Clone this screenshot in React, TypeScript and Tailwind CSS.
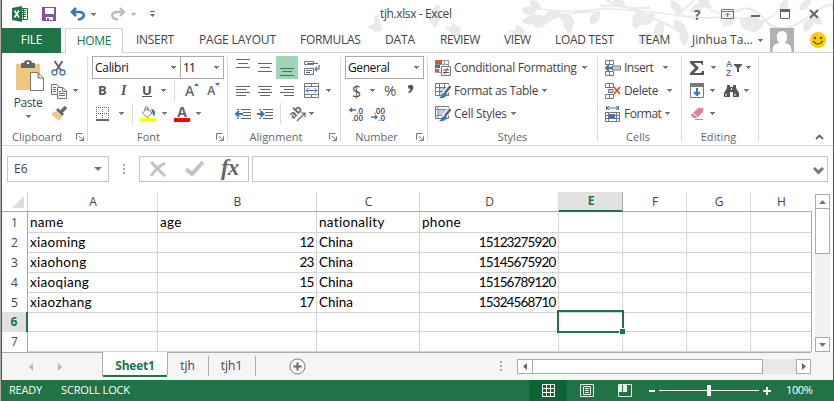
import React from "react";

type Kids = { children?: React.ReactNode; className?: string };

function Icon({ w = 16, h = 16, className = "", children }: Kids & { w?: number; h?: number }) {
  return (
    <svg width={w} height={h} viewBox={`0 0 ${w} ${h}`} fill="none" className={`shrink-0 ${className}`}>
      {children}
    </svg>
  );
}

function Caret({ className = "text-[#777]" }: { className?: string }) {
  return (
    <Icon w={5} h={3} className={className}>
      <path d="M0 0h5v1h-1v1h-1v1h-1v-1h-1v-1h-1z" fill="currentColor" shapeRendering="crispEdges" />
    </Icon>
  );
}

function Launcher() {
  return (
    <Icon w={8} h={8}>
      <path d="M.5 6.500V.5H6.500M3 3L7 7M7.500 3.500V7.500H3.500" stroke="#777" />
    </Icon>
  );
}

function Row({ children, className = "" }: Kids) {
  return <div className={`flex h-[23px] shrink-0 items-center whitespace-nowrap ${className}`}>{children}</div>;
}

function Group({ label, labelClass, launcher, className, children }: Kids & { label: string; labelClass: string; launcher?: boolean }) {
  return (
    <section className={`flex shrink-0 ${className}`}>
      <div className="flex min-w-0 flex-1 flex-col pt-[3px]">
        {children}
        <div className="mt-[3px] flex h-[18px] shrink-0 items-center pr-[3px] text-[11px] leading-[16px] text-[#666]">
          <span className={`flex-1 whitespace-nowrap text-center ${labelClass}`}>{label}</span>
          {launcher && <Launcher />}
        </div>
      </div>
      <div className="mt-1 h-[84px] w-px bg-[#dcdcdc]" />
    </section>
  );
}

function Combo({ text, className }: { text: string; className: string }) {
  return (
    <div className={`flex h-[23px] items-center justify-between border border-[#ababab] bg-white pr-1 pl-[2px] text-[12px] text-[#111] ${className}`}>
      <span>{text}</span>
      <Caret />
    </div>
  );
}

const Lines = ({ d }: { d: string }) => (
  <Icon w={14} h={16}>
    <path d={d} stroke="#666" shapeRendering="crispEdges" />
  </Icon>
);

const leaves: [number, number, number, number, number][] = [
  [537, 12, 190, 16, 9], [545, 17, 168, 24, 10], [549, 18, 150, 18, 9], [554, 18, 170, 16, 8],
  [562, 12, 165, 18, 10], [566, 16, 75, 18, 9], [558, 14, 30, 20, 10], [541, 9, 215, 14, 8], [600, 12, 130, 16, 9],
  [626, 8, 220, 18, 8], [640, 10, 105, 20, 10], [655, 14, 145, 18, 10], [661, 20, 100, 22, 10], [674, 20, 50, 18, 10],
  [682, 14, 230, 18, 8], [690, 12, 330, 18, 8], [650, 33, 140, 16, 9], [683, 26, 85, 20, 9],
  [712, 8, 215, 18, 8], [735, 16, 140, 16, 8], [740, 18, 45, 18, 10], [762, 22, 190, 20, 9], [765, 20, 140, 20, 8],
  [781, 12, 295, 14, 8], [799, 10, 320, 16, 8], [808, 14, 35, 18, 8], [812, 18, 120, 16, 9],
];

function Foliage() {
  return (
    <svg width="470" height="52" viewBox="363 0 470 52" className="pointer-events-none absolute top-0 right-0" fill="#e7eaea">
      <path d="M379 14c-6 1-4 7-5 10l-7 3c3 2 7 1 7 5c3-1 7 0 9-4c-3-5-5-9-4-14z" />
      <path d="M438 4c5 7 3 17-3 24c-4-5-8-8-5-14c1-5 5-7 8-10z" />
      <path d="M444 28c6-2 9 0 8-5c5 2 5 5 10 4l-3 4l4 5h-8c-4-1-4-5-11-8zM508 31c6-2 9 2 8-7c5 2 5 5 10 6l-3 3l3 4h-10c-4-1-4-4-8-6z" />
      <g stroke="#e7eaea" fill="none" strokeWidth="1.500">
        <path d="M535 9C545 8 560 15 600 9C625 8 645 12 676 15M545 21Q565 11 600 12" />
        <path d="M600 6Q623 4 640 12T678 30M606 0Q630 12 650 7M676 15Q689 6 694 0M676 15Q720 22 735 12T765 20T808 17T833 11" strokeWidth="2" />
        <path d="M698 0Q710 14 740 18M765 20Q778 15 786 0" />
      </g>
      {leaves.map(([x, y, a, l, w], i) => (
        <path key={i} transform={`translate(${x} ${y}) rotate(${a})`} d={`M0 0Q${l / 2} ${-w} ${l} 0Q${l / 2} ${w} 0 0`} />
      ))}
    </svg>
  );
}

function TitleBar() {
  return (
    <header className="flex h-7 items-center text-[#666]">
      <Icon className="ml-[10px]">
        <path d="M8 2.500h7.500v11H8" fill="#fff" stroke="#217346" />
        <path d="M10 4.500h4M10 6.500h4M10 8.500h4M10 10.500h4M11.500 3v10" stroke="#217346" />
        <path d="M0 2L10 0V16L0 14z" fill="#217346" />
        <path d="M2.500 4.500L7 11.500M7 4.500L2.500 11.500" stroke="#fff" strokeWidth="1.600" />
      </Icon>
      <Icon w={14} h={14} className="ml-[14px]">
        <path d="M0 0H14V14H0z" fill="#8353ab" />
        <path d="M3 1H12V7H3zM4 10H11V13H7V11H5V13H4z" fill="#fff" />
      </Icon>
      <Icon w={16} h={14} className="ml-[14px]">
        <path d="M6 1L2 5L6 9M2.500 5H9C16 5 15 12 8 12.500" stroke="#3f76b2" strokeWidth="2.600" />
      </Icon>
      <span className="ml-[5px]"><Caret /></span>
      <Icon w={16} h={14} className="ml-[14px]">
        <path d="M10 1L14 5L10 9M13.500 5H7C0 5 1 12 8 12.500" stroke="#bcbcbc" strokeWidth="2.400" />
      </Icon>
      <span className="ml-[5px]"><Caret className="text-[#bbb]" /></span>
      <Icon w={5} h={6} className="ml-[14px]">
        <path d="M0 0H5V1H0zM0 3H5L2.500 6z" fill="#666" />
      </Icon>
      <h1 className="ml-[225px] w-[298px] text-[12px] tracking-[-0.38px] whitespace-nowrap text-[#444]">tjh.xlsx - Excel</h1>
      <span className="ml-[16px] w-2 text-[14px] font-bold">?</span>
      <Icon w={13} h={10} className="ml-[19px]">
        <path d="M.5 .5H12.500V9.500H.5zM1 2.500H12M6.500 8V4M4.500 6L6.500 4L8.500 6" stroke="#777" />
      </Icon>
      <Icon w={9} h={10} className="ml-[17px]"><path d="M0 6H9V8H0z" fill="#666" /></Icon>
      <Icon w={10} h={10} className="ml-5"><path d="M.5 1V9.500H9.500V1M0 1.500H10" stroke="#666" /><path d="M0 0H10V3H0z" fill="#666" /></Icon>
      <Icon w={10} h={10} className="ml-[19px]"><path d="M1 1L9 9M9 1L1 9" stroke="#666" strokeWidth="2" /></Icon>
    </header>
  );
}

function Tabs() {
  return (
    <nav className="flex h-[25px] items-center border-b border-[#d4d4d4] text-[12px] whitespace-nowrap text-[#444]">
      <span className="flex h-[25px] w-[59px] items-center justify-center bg-[#217346] tracking-[-0.3px] text-white">FILE</span>
      <span className="-mb-px ml-1 flex h-[25px] w-[58px] items-center justify-center border border-b-0 border-[#d4d4d4] bg-white tracking-[-0.3px] text-[#217346]">HOME</span>
      <span className="ml-[13px] w-[63px] tracking-[-0.3px]">INSERT</span>
      <span className="w-[101px] tracking-[-0.15px]">PAGE LAYOUT</span>
      <span className="w-[85px] tracking-[-0.3px]">FORMULAS</span>
      <span className="w-[55px] tracking-[-0.1px]">DATA</span>
      <span className="w-16 tracking-[-0.4px]">REVIEW</span>
      <span className="w-[51px] tracking-[-0.4px]">VIEW</span>
      <span className="w-[84px] tracking-[-0.3px]">LOAD TEST</span>
      <span className="w-[53px] tracking-[-0.1px]">TEAM</span>
      <span className="w-[66px]">Jinhua Ta...</span>
      <Caret />
      <Icon w={24} h={24} className="ml-[7px]">
        <path d="M0 0H24V24H0z" fill="#b1b1b1" />
        <path d="M12 3c7 0 6 10 2.500 12c5 1 7 2 7 9h-19c0-7 2-8 7-9C6 13 5 3 12 3z" fill="#fff" />
      </Icon>
      <Icon w={16} h={16} className="ml-4">
        <circle cx="8" cy="8" r="8" fill="#fc0" />
        <circle cx="5" cy="6" r="1.300" fill="#555" /><circle cx="11" cy="6" r="1.300" fill="#555" />
        <path d="M3 9Q8 15 13 9" stroke="#555" strokeWidth="1.200" />
      </Icon>
    </nav>
  );
}

function Clipboard() {
  return (
    <Group label="Clipboard" labelClass="pr-[4px]" launcher className="w-[86px]">
      <div className="flex h-[69px] shrink-0">
        <div className="ml-[10px] flex w-8 flex-col items-center text-[12px] text-[#444]">
          <Icon w={30} h={32} className="mt-[4px] ml-[3px]">
            <path d="M1 4H25V30H1z" fill="#edc87e" />
            <path d="M6 3H9Q9 0 13 0T17 3H20V8H6z" fill="#666" /><path d="M12 2h2v2h-2z" fill="#fff" />
            <path d="M15.500 12.500H23L28.500 18V30.500H15.500zM23 12.500V18H28.500" fill="#fff" stroke="#777" />
          </Icon>
          <span className="mt-[2px] leading-[18px] tracking-[-0.4px]">Paste</span>
          <span className="mt-[3px]"><Caret /></span>
        </div>
        <div className="ml-[7px]">
          <Row>
            <Icon>
              <path d="M3.500 1L10.500 11M11.500 1L5 11" stroke="#666" strokeWidth="2" />
              <circle cx="3.500" cy="12.500" r="2.500" stroke="#3f76b2" strokeWidth="1.300" /><circle cx="11.500" cy="12.500" r="2.500" stroke="#3f76b2" strokeWidth="1.300" />
            </Icon>
          </Row>
          <Row>
            <Icon>
              <path d="M.5 1.500H6L8.500 4V11.500H.5z" fill="#fff" stroke="#777" />
              <path d="M2 4.500H5M2 6.500H5M2 8.500H5" stroke="#3f76b2" />
              <path d="M6.500 4.500H12L15.500 8V15.500H6.500zM11.500 4.500V8.500H15" fill="#fff" stroke="#777" />
              <path d="M8 8.500H10M8 10.500H14M8 12.500H14" stroke="#3f76b2" />
            </Icon>
            <span className="ml-[6px]"><Caret /></span>
          </Row>
          <Row>
            <Icon>
              <path d="M0 8L5 5L11 11L8 15z" fill="#edc87e" /><path d="M5 4L7 2L13 8L11 10z" fill="#666" />
              <path d="M10 6L15 1" stroke="#666" strokeWidth="3.500" />
            </Icon>
          </Row>
        </div>
      </div>
    </Group>
  );
}

function FontGroup() {
  return (
    <Group label="Font" labelClass="pr-[7px]" launcher className="w-[140px]">
      <Row className="pl-1"><Combo text="Calibri" className="w-[89px] tracking-[-0.3px]" /><Combo text="11" className="-ml-px w-[44px] tracking-[-0.8px]" /></Row>
      <Row className="text-[13px] text-[#555]">
        <span className="ml-[10px] w-[23px] font-bold">B</span>
        <span className="w-[21px] font-['Liberation_Serif'] text-[14px] font-bold italic">I</span>
        <span className="w-[19px] font-bold underline">U</span>
        <Caret />
        <span className="ml-[8px] h-[21px] w-px bg-[#dcdcdc]" />
        <span className="ml-[10px] text-[14px] font-semibold text-[#666]">A</span>
        <Icon w={5} h={3} className="mb-[12px]"><path d="M0 3L2.500 0L5 3z" fill="#3f76b2" /></Icon>
        <span className="ml-[8px] text-[12px] font-semibold text-[#666]">A</span>
        <Icon w={5} h={3} className="mb-[12px]"><path d="M0 0L2.500 3L5 0z" fill="#3f76b2" /></Icon>
      </Row>
      <Row>
        <Icon w={14} h={14} className="ml-2">
          <path d="M0 .5H13M0 6.500H13M.5 0V12M6.500 0V12M12.500 0V12" stroke="#666" strokeDasharray="1 1" shapeRendering="crispEdges" /><path d="M0 12H13V14H0z" fill="#666" />
        </Icon>
        <span className="ml-[9px]"><Caret /></span>
        <span className="ml-[8px] h-[21px] w-px bg-[#dcdcdc]" />
        <Icon className="ml-[7px]">
          <path d="M7 2.500L12 7L7 11.500L2.500 7zM5 5V1.500Q6.500 0 8 1.500V5" fill="#fff" stroke="#777" />
          <path d="M11 3C15 3 16 6 14 11L12 6z" fill="#3f76b2" /><path d="M0 12H16V16H0z" fill="#ff0" />
        </Icon>
        <span className="ml-[6px]"><Caret /></span>
        <span className="ml-[7px] flex h-4 w-4 justify-center border-b-4 border-[red] text-[14px] leading-[12px] font-bold text-[#666]">A</span>
        <span className="ml-[6px]"><Caret /></span>
      </Row>
    </Group>
  );
}

function Alignment() {
  return (
    <Group label="Alignment" labelClass="pr-[5px] tracking-[0.1px]" launcher className="w-[113px]">
      <Row className="pl-2">
        <span className="-mt-2"><Lines d="M0 3.500H14M2 7.500H12M0 11.500H14" /></span>
        <span className="-mt-1 ml-2"><Lines d="M0 5.500H14M2 9.500H12M0 13.500H14" /></span>
        <span className="ml-[4px] flex h-[23px] w-[22px] items-end justify-center bg-[#9fd5b7]"><Lines d="M0 5.500H14M2 8.500H12M0 12.500H14" /></span>
        <Icon className="ml-[6px]">
          <path d="M.5 1.500H9.500V4.500H.5zM.5 8.500H9.500V14.500H.5z" stroke="#777" />
          <path d="M3 3.500H14M2 10.500H8M2 12.500H6M15 5V9H11M13 7L11 9L13 11" stroke="#3f76b2" strokeWidth="1.200" />
        </Icon>
      </Row>
      <Row className="pl-2">
        <Lines d="M0 3.500H14M0 6.500H10M0 9.500H14M0 12.500H10" />
        <span className="ml-2"><Lines d="M0 3.500H14M2 6.500H12M0 9.500H14M2 12.500H12" /></span>
        <span className="ml-2"><Lines d="M0 3.500H14M4 6.500H14M0 9.500H14M4 12.500H14" /></span>
        <Icon w={15} h={15} className="ml-[10px]">
          <path d="M.5 .5H14.500V14.500H.5zM0 3.500H15M0 11.500H15M7.500 0V3M7.500 12V15" stroke="#777" />
          <path d="M2 7.500H13M4.500 5L2 7.500L4.500 10M10.500 5L13 7.500L10.500 10" stroke="#3f76b2" />
        </Icon>
        <span className="ml-[7px]"><Caret /></span>
      </Row>
      <Row className="pl-[7px]">
        <Icon><path d="M2 3.500H4M6 3.500H16M8 6.500H16M8 9.500H16M2 12.500H4M6 12.500H16" stroke="#666" /><path d="M1 8H8M4 5L1 8L4 11" stroke="#3f76b2" strokeWidth="2" /></Icon>
        <Icon className="ml-[6px]"><path d="M2 3.500H4M6 3.500H16M8 6.500H16M8 9.500H16M2 12.500H4M6 12.500H16" stroke="#666" /><path d="M0 8H7M3.500 5L6.500 8L3.500 11" stroke="#3f76b2" strokeWidth="2" /></Icon>
        <span className="ml-[7px] h-[21px] w-px bg-[#dcdcdc]" />
        <span className="ml-[7px] flex w-[17px] items-center">
          <span className="mb-1 -rotate-45 text-[11px] leading-none font-bold text-[#666]">ab</span>
          <Icon w={10} h={12} className="mt-1 -ml-[6px]"><path d="M1 11L9 3M5 3H9V7" stroke="#666" strokeWidth="1.200" /></Icon>
        </span>
        <span className="ml-[4px]"><Caret /></span>
      </Row>
    </Group>
  );
}

function NumberGroup() {
  return (
    <Group label="Number" labelClass="pr-[4px]" launcher className="w-[87px]">
      <Row className="pl-1"><Combo text="General" className="w-[79px] tracking-[-0.4px]" /></Row>
      <Row className="text-[16px] text-[#555]">
        <span className="ml-[11px] w-[18px]">$</span><Caret />
        <span className="ml-[9px] w-[24px] text-[15px]">%</span>
        <Icon w={6} h={8} className="mb-1"><path d="M1 0H4Q6 1 5 4T1 8L0 7Q2 6 2.500 4Q0 4 0 2Q0 .5 1 0z" fill="#555" /></Icon>
      </Row>
      <Row className="text-[8px] leading-[7px] text-[#444]">
        <span className="ml-[7px] flex w-[15px] flex-col items-end font-semibold">
          <span className="flex items-center"><Icon w={7} h={6}><path d="M0 3H7M3 1L1 3L3 5" stroke="#3f76b2" strokeWidth="1.500" /></Icon>.0</span><span>.00</span>
        </span>
        <span className="ml-[7px] flex w-[15px] flex-col items-end font-semibold">
          <span>.00</span><span className="flex items-center"><Icon w={7} h={6}><path d="M0 3H6M4 1L6 3L4 5" stroke="#3f76b2" strokeWidth="1.500" /></Icon>.0</span>
        </span>
      </Row>
    </Group>
  );
}

function TableGrid() {
  return <path d="M.5 .5H13.500V12.500H.5zM0 4.500H14M0 8.500H14M4.500 0V13M9.500 0V13" stroke="#777" />;
}
const Brush = () => (
  <>
    <path d="M15.500 3L9 11" stroke="#fff" strokeWidth="5" /><path d="M15.500 3L10 10" stroke="#666" strokeWidth="2.500" />
    <path d="M11 9L12 12Q9 16 4 15Q7 13 7 11z" fill="#3f76b2" />
  </>
);

function Styles() {
  return (
    <Group label="Styles" labelClass="pl-[3px]" className="w-[170px]">
      <div className="pl-[7px] text-[12px] text-[#444]">
        <Row>
          <Icon><path d="M.5 .5H13.500V12.500H.5z" stroke="#999" /><path d="M9.500 0V5M0 4.500H14" stroke="#999" /><path d="M0 0H7V4H0z" fill="#e2532f" /><path d="M0 5H5V8H0z" fill="#3f76b2" /><path d="M0 9H4V12H0z" fill="#e2532f" /><path d="M6.500 6.500H15.500V15.500H6.500z" fill="#fff" stroke="#777" /><path d="M8 10H14M8 12.500H14M12.500 8L9.500 14" stroke="#555" /></Icon>
          <span className="ml-[3px] w-[128px] tracking-[-0.28px]">Conditional Formatting</span><Caret />
        </Row>
        <Row>
          <Icon><path d="M4 4H14V13H4z" fill="#bdd0e8" /><TableGrid /><Brush /></Icon>
          <span className="ml-[3px] w-[88px] tracking-[-0.35px]">Format as Table</span><Caret />
        </Row>
        <Row>
          <Icon><path d="M.5 .5H13.500V12.500H.5z" stroke="#777" /><path d="M3 3H12V10H3z" fill="#bdd0e8" /><path d="M3 .5V12M0 3.500H14M0 9.500H10" stroke="#888" /><Brush /></Icon>
          <span className="ml-[3px] w-[57px] tracking-[-0.3px]">Cell Styles</span><Caret />
        </Row>
      </div>
    </Group>
  );
}

function Cells() {
  const blocks = "M.5 .5H8.500V4.500H.5zM4.500 .5V4.500M.5 11.500H8.500V15.500H.5zM4.500 11.500V15.500";
  return (
    <Group label="Cells" labelClass="" className="w-[84px]">
      <div className="pl-[7px] text-[12px] text-[#444]">
        <Row><Icon><path d={blocks} stroke="#777" /><path d="M7 6H15.500V10H7z" fill="#bdd0e8" stroke="#777" /><path d="M1 8H8M4 5L1 8L4 11" stroke="#3f76b2" strokeWidth="2" /></Icon><span className="ml-[3px] w-[39px] tracking-[-0.5px]">Insert</span><Caret /></Row>
        <Row><Icon><path d={blocks} stroke="#777" /><path d="M3.500 6.500H8V9.500H3.500z" fill="#bdd0e8" stroke="#777" /><path d="M9 4L15 11M15 4L9 11" stroke="#e2532f" strokeWidth="1.800" /></Icon><span className="ml-[3px] w-[43px] tracking-[-0.35px]">Delete</span><Caret /></Row>
        <Row><Icon><path d="M1.500 0V4M13.500 0V4M2 2H13M4 0L2 2L4 4M11 0L13 2L11 4" stroke="#3f76b2" /><path d="M.5 6.500H14.500V15.500H.5zM0 9.500H15M0 12.500H15M3.500 6V16M11.500 6V16" stroke="#777" /><path d="M4 8H10V13H4z" fill="#3f76b2" /></Icon><span className="ml-[3px] w-[41px] tracking-[-0.5px]">Format</span><Caret /></Row>
      </div>
    </Group>
  );
}

function Editing() {
  return (
    <Group label="Editing" labelClass="tracking-[0.1px]" className="w-[77px]">
      <Row className="pl-[7px]">
        <Icon><path d="M1 1H14V5H13L12 3H5L10 8L5 13H12L13 11H15V15H1V13L6 8L1 3z" fill="#555" /></Icon>
        <span className="ml-[6px]"><Caret /></span>
        <span className="ml-[10px] flex w-[6px] flex-col text-[9px] leading-[9px] font-semibold"><span className="text-[#3f76b2]">A</span><span className="text-[#8b4bab]">Z</span></span>
        <Icon w={8} h={8} className="ml-[2px]"><path d="M0 0H8V1L5 4V8H3V4L0 1z" fill="#555" /></Icon>
        <span className="ml-[4px]"><Caret /></span>
      </Row>
      <Row className="pl-2">
        <Icon w={14} h={16}><path d="M.5 .5H13.500V14.500H.5z" fill="#fff" stroke="#777" /><path d="M0 0H14V4H0z" fill="#777" /><path d="M7 5V12M4 9L7 12L10 9" stroke="#3f76b2" strokeWidth="2" /></Icon>
        <span className="ml-[6px]"><Caret /></span>
        <Icon w={15} h={14} className="ml-[9px]"><path d="M3 1H6V3H9V1H12V4L15 9V13H9V8H6V13H0V9L3 4z" fill="#555" /><path d="M2 9.500V12M11 9.500V12M7.500 4V6" stroke="#fff" /></Icon>
        <span className="ml-[5px]"><Caret /></span>
      </Row>
      <Row className="pl-2">
        <Icon w={14} h={16}><path d="M8 2H13V6L7 12H3L1 9z" fill="#e98299" /><path d="M3 7L7 11" stroke="#fff" /><path d="M5 13.500H13" stroke="#999" /></Icon>
        <span className="ml-[6px]"><Caret /></span>
      </Row>
    </Group>
  );
}

function FormulaBar() {
  return (
    <div className="flex h-[46px] items-start pt-[10px] pl-[5px]">
      <div className="flex h-[26px] w-[102px] items-center justify-between border border-[#c6c6c6] pr-[6px] pl-[6px] text-[12px] text-[#444]">
        E6
        <Icon w={8} h={4}><path d="M0 0H8L4 4z" fill="#777" /></Icon>
      </div>
      <div className="mt-2 ml-[14px] flex w-[2px] flex-col gap-[2px]">
        <i className="h-[2px] bg-[#aaa]" /><i className="h-[2px] bg-[#aaa]" /><i className="h-[2px] bg-[#aaa]" />
      </div>
      <div className="ml-[14px] flex h-[26px] w-[110px] items-center border border-[#c6c6c6]">
        <Icon w={18} h={16} className="ml-[9px]"><path d="M2 1L16 15M16 2Q8 6 2 15" stroke="#c3c3c3" strokeWidth="3" /></Icon>
        <Icon w={19} h={16} className="ml-[18px]"><path d="M1 8L7 13L18 1" stroke="#c3c3c3" strokeWidth="4" /></Icon>
        <span className="ml-[17px] pb-1 font-['Liberation_Serif'] text-[23px] leading-none font-bold tracking-[-1px] text-[#666] italic">fx</span>
      </div>
      <div className="ml-[3px] flex h-[26px] w-[576px] items-center justify-end border border-[#c6c6c6] pr-[3px]">
        <Icon w={11} h={8} className="mt-1"><path d="M1 1L5.500 5.500L10 1" stroke="#777" strokeWidth="3" /></Icon>
      </div>
    </div>
  );
}

const columns = ["A", "B", "C", "D", "E", "F", "G", "H"];
const data = [
  ["name", "age", "nationality", "phone"],
  ["xiaoming", "12", "China", "15123275920"],
  ["xiaohong", "23", "China", "15145675920"],
  ["xiaoqiang", "15", "China", "15156789120"],
  ["xiaozhang", "17", "China", "15324568710"],
  [],
  [],
];
const cols = "grid grid-cols-[26px_130px_159px_103px_139px_64px_64px_64px_61px]";

function Sheet() {
  return (
    <div className="flex h-[160px]">
      <div className="w-[810px]">
        <div className={`${cols} h-5 border-b border-[#ababab] text-[12px] text-[#444]`}>
          <div className="flex items-end justify-end border-r border-[#dadada] pr-[3px] pb-[3px]"><Icon w={12} h={12}><path d="M12 0V12H0z" fill="#dedede" /></Icon></div>
          {columns.map((c) => (
            <div key={c} className={`flex items-center justify-center border-r pl-px ${c === "E" ? "-mb-px border-b-2 border-r-[#ababab] border-b-[#217346] bg-[#e1e1e1] font-bold text-[#217346]" : c === "H" ? "border-transparent" : "border-[#dadada]"}`}>{c}</div>
          ))}
        </div>
        {data.map((row, r) => (
          <div key={r} className={`${cols} h-5`}>
            <div className={`flex items-center justify-center text-[12px] ${r === 5 ? "border-r-2 border-[#217346] bg-[#e1e1e1] font-bold text-[#217346]" : "border-r border-[#ababab] text-[#444]"}`}>{r + 1}</div>
            {columns.map((c, i) => (
              <div key={c} className={`relative flex items-center border-r border-b border-b-[#d4d4d4] pl-[2px] font-['Lato'] text-[13.5px] text-black [font-variant-ligatures:none] ${i === 7 ? "border-r-[#ababab]" : "border-r-[#d4d4d4]"} ${r > 0 && (i === 1 || i === 3) ? "justify-end pr-[2.5px] tracking-[-0.85px]" : r > 0 && i === 2 ? "" : "tracking-[0.3px]"}`}>
                {row[i]}
                {r === 5 && i === 4 && (
                  <div className="absolute -top-[2px] -right-[2px] -bottom-[2px] -left-[2px] z-10 border-2 border-[#217346]">
                    <i className="absolute -right-[3px] -bottom-[3px] h-[6px] w-[6px] border-t border-l border-white bg-[#217346]" />
                  </div>
                )}
              </div>
            ))}
          </div>
        ))}
      </div>
      <div className="ml-[3px] flex w-[15px] flex-col pt-[2px]">
        <div className="flex h-[15px] items-center justify-center border border-[#ababab]"><Icon w={7} h={4}><path d="M0 4L3.500 0L7 4z" fill="#777" /></Icon></div>
        <div className="-mt-px h-[46px] border border-[#ababab] bg-white" />
        <div className="flex-1 bg-[#f1f1f1]" />
        <div className="flex h-[15px] items-center justify-center border border-[#ababab] bg-white"><Icon w={7} h={4}><path d="M0 0L3.500 4L7 0z" fill="#777" /></Icon></div>
      </div>
    </div>
  );
}

function SheetTabs() {
  return (
    <div className="flex h-7 items-start bg-[#f5f5f5] text-[12px] text-[#444]">
      <div className="flex h-7 w-[101px] items-center border-t border-[#ababab]">
        <Icon w={4} h={8} className="ml-[27px]"><path d="M4 0V8L0 4z" fill="#b9b9b9" /></Icon>
        <Icon w={4} h={8} className="ml-[25px]"><path d="M0 0V8L4 4z" fill="#b9b9b9" /></Icon>
        <i className="ml-auto h-[23px] w-px self-start bg-[#ababab]" />
      </div>
      <div className="flex h-[25px] w-[64px] items-center justify-center border-b-2 border-[#217346] bg-white pt-[4px] font-bold tracking-[-0.2px] text-[#217346]">Sheet1</div>
      <i className="h-[23px] w-px bg-[#ababab]" />
      <div className="flex h-7 w-[643px] items-start border-t border-[#ababab] pt-[3px]">
        <span className="flex h-5 w-[41px] items-center justify-center border-r border-[#ababab] pr-[1px]">tjh</span>
        <span className="flex h-5 w-[47px] items-center justify-center border-r border-[#ababab] pr-[1px]">tjh1</span>
        <Icon w={17} h={17} className="mt-[2px] ml-[33px]"><circle cx="8.500" cy="8.500" r="7.500" stroke="#777" /><path d="M4.500 8.500H12.500M8.500 4.500V12.500" stroke="#666" strokeWidth="2" /></Icon>
        <div className="mt-[5px] ml-[194px] flex w-[2px] flex-col gap-[2px]"><i className="h-[2px] bg-[#aaa]" /><i className="h-[2px] bg-[#aaa]" /><i className="h-[2px] bg-[#aaa]" /></div>
        <div className="mt-[3px] ml-[15px] flex h-[15px] w-[294px] bg-[#e8e8e8]">
          <div className="flex w-4 items-center justify-center border border-[#ababab] bg-white"><Icon w={4} h={7}><path d="M4 0V7L0 3.500z" fill="#666" /></Icon></div>
          <div className="-ml-px w-[231px] border border-[#ababab] bg-white" />
          <div className="ml-auto flex w-[15px] items-center justify-center border border-[#ababab] bg-white"><Icon w={4} h={7}><path d="M0 0V7L4 3.500z" fill="#666" /></Icon></div>
        </div>
      </div>
    </div>
  );
}

function StatusBar() {
  return (
    <footer className="flex h-[21px] items-center bg-[#217346] pl-[7px] text-[11px] whitespace-nowrap text-white">
      <span className="w-[52px] tracking-[-0.2px]">READY</span>
      <span className="w-[468px] tracking-[-0.15px]">SCROLL LOCK</span>
      <div className="flex h-full w-[38px] items-center justify-center bg-[#0b6431]"><Icon w={13} h={13}><path d="M.5 .5H12.500V12.500H.5zM0 4.500H13M0 8.500H13M4.500 0V13M8.500 0V13" stroke="#fff" shapeRendering="crispEdges" /></Icon></div>
      <Icon w={14} h={13} className="ml-[13px]"><path d="M.5 .5H13.500V12.500H.5zM3.500 2.500H10.500V10.500H3.500zM5 4.500H9M5 6.500H9M5 8.500H9" stroke="#e3eee8" /></Icon>
      <Icon w={14} h={13} className="ml-6"><path d="M.5 .5H13.500V12.500H.5z" stroke="#e3eee8" /><path d="M1 1H4V8H1zM5 1H9V8H5z" fill="#e3eee8" /></Icon>
      <i className="ml-[17px] h-[2px] w-[6px] bg-white" />
      <div className="ml-1 flex h-3 w-[100px] items-center justify-center bg-[linear-gradient(#fff,#fff)] bg-[length:100%_1px] bg-center bg-no-repeat"><i className="h-[11px] w-1 bg-white" /></div>
      <Icon w={8} h={8} className="ml-1"><path d="M4 0V8M0 4H8" stroke="#fff" strokeWidth="2" /></Icon>
      <span className="ml-[15px] tracking-[-0.4px]">100%</span>
    </footer>
  );
}

export default function App() {
  return (
    <div className="h-[401px] w-[834px] overflow-hidden border-l border-[#aaa] bg-white font-['Open_Sans','Noto_Sans',sans-serif]">
      <main className="relative flex h-full flex-col border-x border-[#217346]">
        <Foliage />
        <div className="relative">
          <TitleBar />
          <Tabs />
        </div>
        <div className="relative flex h-[93px] border-b border-[#d4d4d4] bg-white">
          <Clipboard /><FontGroup /><Alignment /><NumberGroup /><Styles /><Cells /><Editing />
          <Icon w={9} h={6} className="mt-[81px] ml-[56px]"><path d="M1 5L4.500 1.500L8 5" stroke="#666" strokeWidth="1.800" /></Icon>
        </div>
        <FormulaBar />
        <Sheet />
        <SheetTabs />
        <StatusBar />
      </main>
    </div>
  );
}
